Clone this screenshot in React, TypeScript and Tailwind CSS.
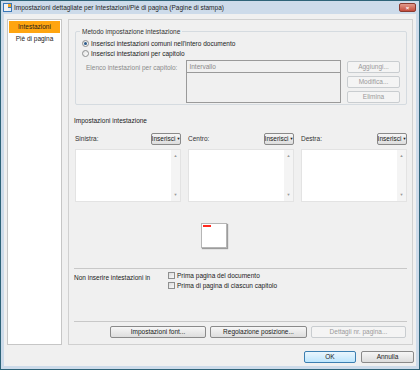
import React from "react";

const font = { fontFamily: '"Liberation Sans", Arial, sans-serif' };

function Btn({ label, w, disabled = false, primary = false }: { label: string; w: string; disabled?: boolean; primary?: boolean }) {
  return (
    <div
      className={`${w} h-[12px] flex items-center justify-center rounded-[2px] border text-[6.5px] leading-none ${
        disabled
          ? "border-[#c9cdd0] bg-[#f4f4f4] text-[#9a9a9a]"
          : primary
          ? "border-[#3c7fb1] bg-gradient-to-b from-[#eaf6fd] to-[#bee6fd] text-[#1a1a1a]"
          : "border-[#8a8a8a] bg-gradient-to-b from-[#f6f6f6] to-[#dddddd] text-[#1a1a1a]"
      }`}
    >
      {label}
    </div>
  );
}

function Radio({ checked }: { checked?: boolean }) {
  return (
    <div className="w-[7px] h-[7px] rounded-full border border-[#8e8f8f] bg-gradient-to-br from-[#e0e0e0] to-white flex items-center justify-center">
      {checked && <div className="w-[3px] h-[3px] rounded-full bg-[#2a5a8a]" />}
    </div>
  );
}

function Check() {
  return <div className="w-[7px] h-[7px] border border-[#8e8f8f] bg-gradient-to-br from-[#dcdcdc] to-[#f8f8f8]" />;
}

function Column({ label }: { label: string }) {
  return (
    <div className="w-[106px] flex flex-col">
      <div className="h-[12px] flex items-center justify-between">
        <span className="text-[6.5px] text-[#333]">{label}</span>
        <div className="w-[30px] h-[12px] flex items-center justify-center rounded-[2px] border border-[#8a8a8a] bg-gradient-to-b from-[#f6f6f6] to-[#dddddd] text-[6.5px] text-[#1a1a1a]">
          Inserisci<span className="text-[4px] ml-[1px]">▼</span>
        </div>
      </div>
      <div className="mt-[4px] h-[53px] bg-white border border-[#e3e3e3] flex justify-end">
        <div className="w-[9px] bg-[#f4f4f4] flex flex-col items-center justify-between py-[3px] text-[4px] text-[#999]">
          <span>▲</span>
          <span>▼</span>
        </div>
      </div>
    </div>
  );
}

export default function App() {
  return (
    <div style={font} className="w-[420px] h-[370px] bg-[#2e6378] p-[1px] overflow-hidden">
      <div className="w-full h-full flex flex-col bg-[#cddbea]">
        {/* titolo */}
        <div className="h-[13px] flex items-center px-[2px] shrink-0">
          <svg width="9" height="9" viewBox="0 0 9 9">
            <rect x="0" y="0" width="9" height="9" fill="#3a78b8" />
            <rect x="1" y="1" width="4" height="7" fill="#f2f2f2" />
            <rect x="5" y="1" width="3" height="3" fill="#f5a623" />
            <rect x="5" y="5" width="3" height="3" fill="#e8eef5" />
          </svg>
          <span className="ml-[2px] text-[6.5px] text-[#1e1e1e]">
            Impostazioni dettagliate per Intestazioni/Piè di pagina (Pagine di stampa)
          </span>
          <div className="ml-auto mr-[1px] w-[17px] h-[9px] rounded-[2px] bg-gradient-to-b from-[#e09a8c] to-[#c44a3a] border border-[#8a3a30] flex items-center justify-center text-white text-[6px] font-bold leading-none">
            ×
          </div>
        </div>

        <div className="flex-1 mx-[3px] mb-[3px] bg-[#f0f0f0] flex flex-col">
          <div className="flex mt-[5px] ml-[3px] gap-[6px]">
            {/* barra laterale */}
            <div className="w-[55px] h-[326px] bg-white border border-[#c6c6c6] pt-[1px] px-[1px]">
              <div className="h-[12px] bg-[#ffa510] flex items-center justify-center text-[6.5px] text-[#1a1a1a]">Intestazioni</div>
              <div className="h-[12px] flex items-center justify-center text-[6.5px] text-[#1a1a1a]">Piè di pagina</div>
            </div>

            {/* pannello */}
            <div className="w-[345px] h-[326px] border border-[#d0d0d0] px-[5px] flex flex-col">
              <div className="mt-[11px] ml-[1px] w-[332px] h-[74px] border border-[#d5dbe0] rounded-[2px] relative px-[6px]">
                <span className="absolute -top-[5px] left-[4px] px-[2px] bg-[#f0f0f0] text-[6.5px] text-[#333] leading-[9px]">
                  Metodo impostazione intestazione
                </span>
                <div className="mt-[7px] flex items-center gap-[2px] h-[9px]">
                  <Radio checked />
                  <span className="text-[6.5px] text-[#1a1a1a]">Inserisci intestazioni comuni nell'intero documento</span>
                </div>
                <div className="mt-[1px] flex items-center gap-[2px] h-[9px]">
                  <Radio />
                  <span className="text-[6.5px] text-[#1a1a1a]">Inserisci intestazioni per capitolo</span>
                </div>
                <div className="mt-[2px] flex">
                  <span className="ml-[4px] w-[102px] pt-[3px] text-[6.5px] text-[#8a8a8a]">Elenco intestazioni per capitolo:</span>
                  <div className="w-[157px] h-[43px] border border-[#9a9a9a] bg-[#f0f0f0]">
                    <div className="h-[12px] border-b border-[#9a9a9a] flex items-center px-[2px] text-[6.5px] text-[#8a8a8a]">Intervallo</div>
                  </div>
                  <div className="ml-[6px] flex flex-col gap-[3px] pt-[1px]">
                    <Btn label="Aggiungi..." w="w-[53px]" disabled />
                    <Btn label="Modifica..." w="w-[53px]" disabled />
                    <Btn label="Elimina" w="w-[53px]" disabled />
                  </div>
                </div>
              </div>

              <div className="mt-[11px] text-[6.5px] text-[#1a1a1a]">Impostazioni intestazione</div>

              <div className="mt-[7px] ml-[1px] flex gap-[7px]">
                <Column label="Sinistra:" />
                <Column label="Centro:" />
                <Column label="Destra:" />
              </div>

              <div className="mt-[21px] ml-[127px] w-[26px] h-[25px] bg-white border border-[#b5b5b5] shadow-[1px_1px_1px_rgba(0,0,0,0.35)]">
                <div className="mt-[1px] ml-[1px] w-[8px] h-[2px] bg-[#ff2a1f]" />
              </div>

              <div className="mt-[20px] h-px bg-[#c8c8c8]" />

              <div className="mt-[3px] flex">
                <span className="w-[94px] pt-[1px] text-[6.5px] text-[#1a1a1a]">Non inserire intestazioni in</span>
                <div className="flex flex-col gap-[2px]">
                  <div className="flex items-center gap-[2px] h-[8px]">
                    <Check />
                    <span className="text-[6.5px] text-[#1a1a1a]">Prima pagina del documento</span>
                  </div>
                  <div className="flex items-center gap-[2px] h-[8px]">
                    <Check />
                    <span className="text-[6.5px] text-[#1a1a1a]">Prima di pagina di ciascun capitolo</span>
                  </div>
                </div>
              </div>

              <div className="mt-auto h-px bg-[#c8c8c8]" />
              <div className="mt-[4px] mb-[6px] flex justify-end gap-[4px] pr-[1px]">
                <Btn label="Impostazioni font..." w="w-[96px]" />
                <Btn label="Regolazione posizione..." w="w-[97px]" />
                <Btn label="Dettagli nr. pagina..." w="w-[95px]" disabled />
              </div>
            </div>
          </div>

          <div className="mt-[6px] flex justify-end gap-[5px] pr-[2px]">
            <Btn label="OK" w="w-[52px]" primary />
            <Btn label="Annulla" w="w-[53px]" />
          </div>
        </div>
      </div>
    </div>
  );
}
